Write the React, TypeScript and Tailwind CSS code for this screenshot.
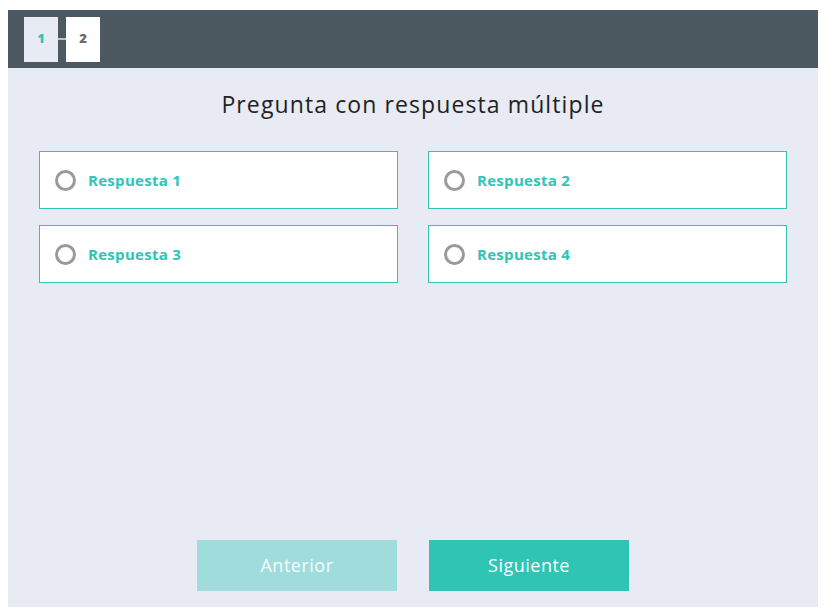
const options = ["Respuesta 1", "Respuesta 2", "Respuesta 3", "Respuesta 4"];

function Radio() {
  return <span className="block size-[21px] shrink-0 rounded-full border-[3.5px] border-[#9a9a9a] bg-white" />;
}

export default function App() {
  return (
    <div className="min-h-[616px] bg-white px-2 pt-[10px] font-['Open_Sans',sans-serif]">
      <div className="flex h-[597px] w-[810px] flex-col bg-[#e8ebf3]">
        <header className="flex h-[58px] items-center bg-[#4d5961] px-4">
          <div className="flex items-center">
            <span className="grid h-[45px] w-[34px] place-items-center bg-[#e8ebf3] text-[13px] font-extrabold text-[#2ec4b6]">1</span>
            <span className="h-[2px] w-2 bg-[#c3c3c3]" />
            <span className="grid h-[45px] w-[34px] place-items-center bg-white text-[13px] font-extrabold text-[#6b6b6b]">2</span>
          </div>
        </header>

        <main className="flex flex-1 flex-col px-[31px] pb-4">
          <h1 className="mt-[22px] text-center text-[23px] leading-[28px] tracking-[1.1px] text-[#222]">Pregunta con respuesta múltiple</h1>

          <div className="mt-[33px] grid grid-cols-2 gap-x-[30px] gap-y-4">
            {options.map((o) => (
              <label key={o} className="flex h-[58px] cursor-pointer items-center gap-[12px] border border-[#2ec4b6] bg-white pl-[15px]">
                <Radio />
                <span className="text-[15px] font-bold tracking-[0.3px] text-[#2ec4b6]">{o}</span>
              </label>
            ))}
          </div>

          <div className="mt-auto flex justify-center gap-8">
            <button type="button" className="h-[51px] w-[200px] bg-[#a1dcdc] text-[18px] tracking-[0.5px] text-white/90">Anterior</button>
            <button type="button" className="h-[51px] w-[200px] bg-[#2ec5b5] text-[18px] tracking-[0.5px] text-white">Siguiente</button>
          </div>
        </main>
      </div>
    </div>
  );
}
